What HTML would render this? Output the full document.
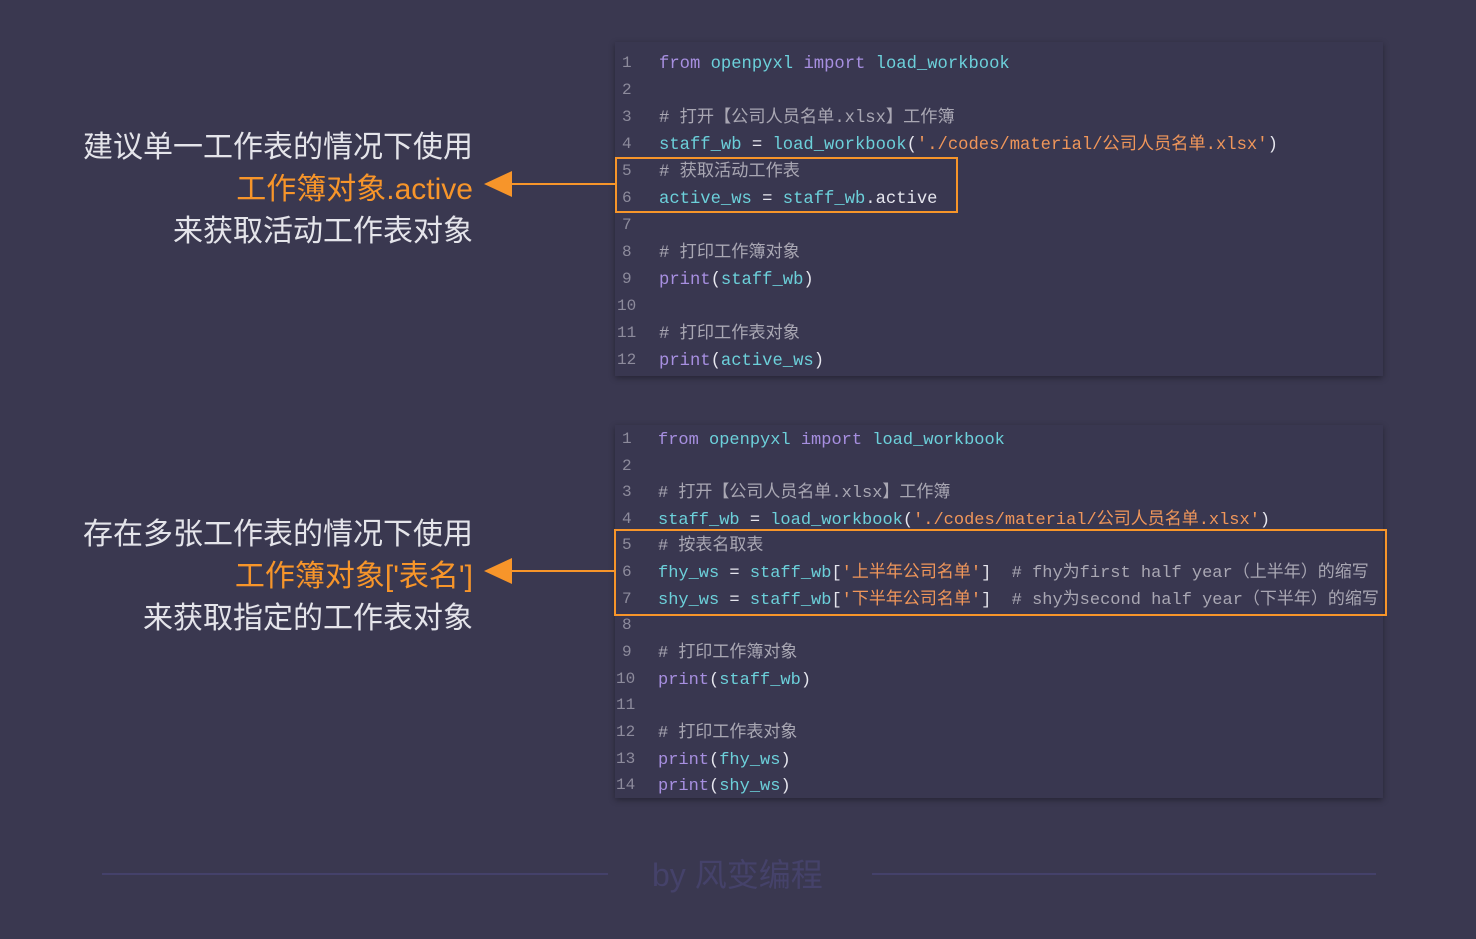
<!DOCTYPE html>
<html><head><meta charset="utf-8"><style>
body{margin:0;width:1476px;height:939px;background:#3a3850;position:relative;overflow:hidden;font-family:"Liberation Sans","Noto Sans CJK SC",sans-serif}
.panel{position:absolute;left:615px;width:768px;background:#393750;box-shadow:0 2px 6px rgba(0,0,0,.35)}
.code{position:absolute;font-family:"Liberation Mono","Noto Sans CJK SC",monospace;font-size:17.2px;line-height:20px;height:20px;white-space:pre;color:#e6e6ee;margin-top:3px}
.b2 .code{font-size:17px}
.ln{position:absolute;left:622px;font-family:"Liberation Mono",monospace;font-size:16px;line-height:20px;color:#8d8b9c;margin-top:1px}
.k{color:#a78fe0}.i{color:#6cd0da}.s{color:#f0965a}.c{color:#a9a7b3}
.box{position:absolute;border:2px solid #f7952a}
.lt{position:absolute;right:1003px;font-size:30px;line-height:36px;color:#e4e4ea;white-space:nowrap;text-align:right;margin-top:3px}
.o{color:#f7952a}
.arrow{position:absolute;height:2px;background:#f7952a}
.tri{position:absolute;width:0;height:0;border-top:13px solid transparent;border-bottom:13px solid transparent;border-right:28px solid #f7952a}
</style></head><body>
<div class="panel" style="top:42px;height:334px"></div>
<div class="panel" style="top:425px;height:373px"></div>

<div class="ln" style="top:52px">1</div><div class="code" style="left:659px;top:52px"><span class="k">from</span> <span class="i">openpyxl</span> <span class="k">import</span> <span class="i">load_workbook</span></div>
<div class="ln" style="top:79px">2</div>
<div class="ln" style="top:106px">3</div><div class="code c" style="left:659px;top:106px"># 打开【公司人员名单.xlsx】工作簿</div>
<div class="ln" style="top:133px">4</div><div class="code" style="left:659px;top:133px"><span class="i">staff_wb</span> = <span class="i">load_workbook</span>(<span class="s">'./codes/material/公司人员名单.xlsx'</span>)</div>
<div class="ln" style="top:160px">5</div><div class="code c" style="left:659px;top:160px"># 获取活动工作表</div>
<div class="ln" style="top:187px">6</div><div class="code" style="left:659px;top:187px"><span class="i">active_ws</span> = <span class="i">staff_wb</span>.active</div>
<div class="ln" style="top:214px">7</div>
<div class="ln" style="top:241px">8</div><div class="code c" style="left:659px;top:241px"># 打印工作簿对象</div>
<div class="ln" style="top:268px">9</div><div class="code" style="left:659px;top:268px"><span class="k">print</span>(<span class="i">staff_wb</span>)</div>
<div class="ln" style="top:295px;left:617px">10</div>
<div class="ln" style="top:322px;left:617px">11</div><div class="code c" style="left:659px;top:322px"># 打印工作表对象</div>
<div class="ln" style="top:349px;left:617px">12</div><div class="code" style="left:659px;top:349px"><span class="k">print</span>(<span class="i">active_ws</span>)</div>
<div class="box" style="left:615px;top:157px;width:339px;height:52px"></div>

<div class="b2">
<div class="ln" style="top:428px">1</div><div class="code" style="left:658px;top:428px"><span class="k">from</span> <span class="i">openpyxl</span> <span class="k">import</span> <span class="i">load_workbook</span></div>
<div class="ln" style="top:455px">2</div>
<div class="ln" style="top:481px">3</div><div class="code c" style="left:658px;top:481px"># 打开【公司人员名单.xlsx】工作簿</div>
<div class="ln" style="top:508px">4</div><div class="code" style="left:658px;top:508px"><span class="i">staff_wb</span> = <span class="i">load_workbook</span>(<span class="s">'./codes/material/公司人员名单.xlsx'</span>)</div>
<div class="ln" style="top:534px">5</div><div class="code c" style="left:658px;top:534px"># 按表名取表</div>
<div class="ln" style="top:561px">6</div><div class="code" style="left:658px;top:561px"><span class="i">fhy_ws</span> = <span class="i">staff_wb</span>[<span class="s">'上半年公司名单'</span>]  <span class="c"># fhy为first half year（上半年）的缩写</span></div>
<div class="ln" style="top:588px">7</div><div class="code" style="left:658px;top:588px"><span class="i">shy_ws</span> = <span class="i">staff_wb</span>[<span class="s">'下半年公司名单'</span>]  <span class="c"># shy为second half year（下半年）的缩写</span></div>
<div class="ln" style="top:614px">8</div>
<div class="ln" style="top:641px">9</div><div class="code c" style="left:658px;top:641px"># 打印工作簿对象</div>
<div class="ln" style="top:668px;left:616px">10</div><div class="code" style="left:658px;top:668px"><span class="k">print</span>(<span class="i">staff_wb</span>)</div>
<div class="ln" style="top:694px;left:616px">11</div>
<div class="ln" style="top:721px;left:616px">12</div><div class="code c" style="left:658px;top:721px"># 打印工作表对象</div>
<div class="ln" style="top:748px;left:616px">13</div><div class="code" style="left:658px;top:748px"><span class="k">print</span>(<span class="i">fhy_ws</span>)</div>
<div class="ln" style="top:774px;left:616px">14</div><div class="code" style="left:658px;top:774px"><span class="k">print</span>(<span class="i">shy_ws</span>)</div>
</div>
<div class="box" style="left:614px;top:529px;width:769px;height:83px"></div>

<div class="lt" style="top:127px">建议单一工作表的情况下使用</div>
<div class="lt o" style="top:169px">工作簿对象.active</div>
<div class="lt" style="top:211px">来获取活动工作表对象</div>
<div class="tri" style="left:484px;top:171px"></div><div class="arrow" style="left:510px;top:183px;width:105px"></div>

<div class="lt" style="top:514px">存在多张工作表的情况下使用</div>
<div class="lt o" style="top:556px">工作簿对象['表名']</div>
<div class="lt" style="top:598px">来获取指定的工作表对象</div>
<div class="tri" style="left:484px;top:558px"></div><div class="arrow" style="left:510px;top:570px;width:105px"></div>

<div style="position:absolute;left:102px;top:873px;width:506px;height:2px;background:#44416a"></div>
<div style="position:absolute;left:872px;top:873px;width:504px;height:2px;background:#44416a"></div>
<div style="position:absolute;left:652px;top:856px;font-size:32px;line-height:38px;color:#45426a">by 风变编程</div>
</body></html>
